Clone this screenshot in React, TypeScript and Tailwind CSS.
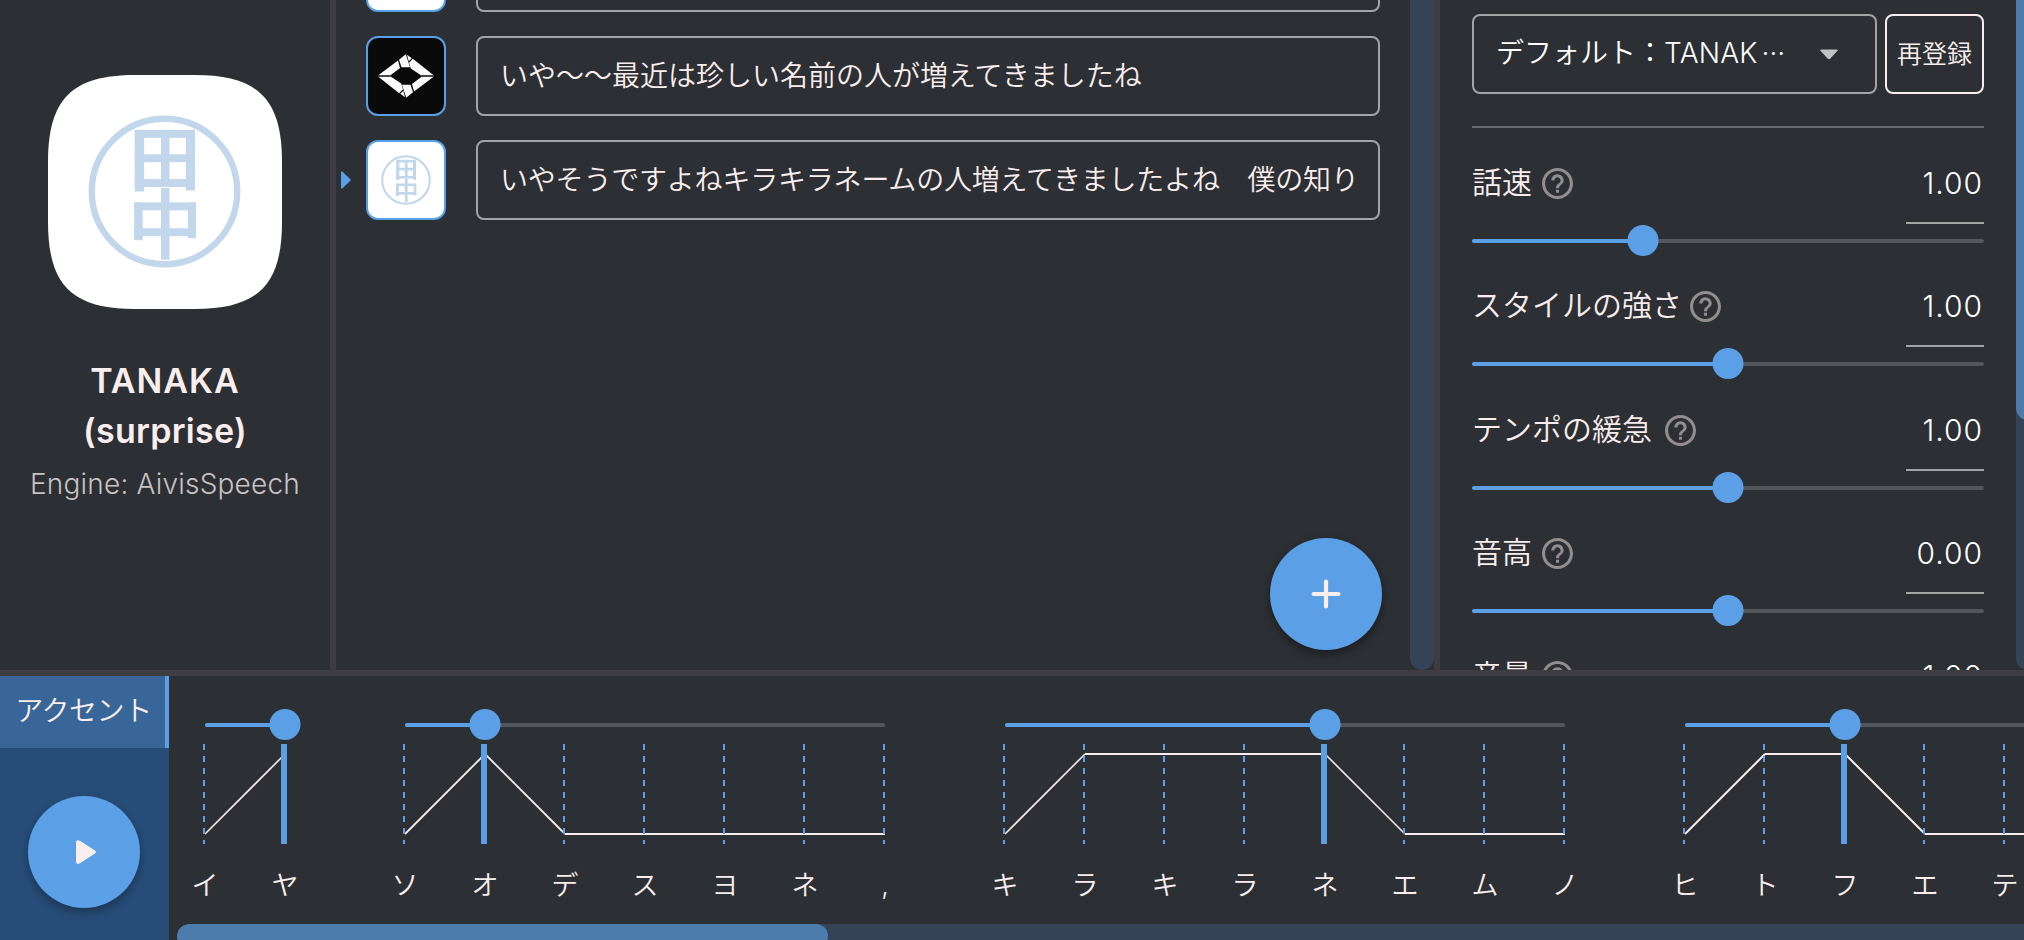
import React from "react";

const JP = "font-['Inter','Noto_Sans_CJK_JP',sans-serif]";

function TanakaMark({ className }: { className: string }) {
  return (
    <svg viewBox="0 0 154 154" className={className} fill="#c2d6ec">
      <circle cx="77" cy="77" r="73.2" fill="none" stroke="#c2d6ec" strokeWidth="6.4" />
      <rect x="47" y="15" width="9.5" height="62" />
      <rect x="98.5" y="15" width="9.2" height="61" />
      <rect x="73.5" y="15" width="8.5" height="55" />
      <rect x="47" y="15" width="60" height="8" />
      <rect x="47" y="39.5" width="60" height="8" />
      <rect x="47" y="64.5" width="60" height="8" />
      <rect x="46.5" y="88" width="62" height="8" />
      <rect x="46.5" y="88" width="8.5" height="38" />
      <rect x="100.5" y="88" width="8.2" height="36" />
      <rect x="46.5" y="114" width="62" height="8" />
      <rect x="73.5" y="73.5" width="8.5" height="72" />
    </svg>
  );
}

function ApertureMark() {
  const half = (
    <g>
      <polygon points="12.3,39.2 32,24.6 34,32 24.5,39.2" />
      <polygon points="33,23.8 39.8,18.3 44,31.2 35.5,31.2" />
      <polygon points="41,18.8 45.8,22.2 42.6,25.2" />
      <polygon points="46.8,22.8 67.7,39.2 55,39.2 44.8,32.6 43,26.8" />
    </g>
  );
  return (
    <svg viewBox="2 2 76 76" className="h-[76px] w-[76px] shrink-0" fill="#fafafa">
      {half}
      <g transform="rotate(180 40 40)">{half}</g>
      <rect x="12.3" y="39.2" width="13" height="1.6" fill="#4a4645" />
      <rect x="54.7" y="39.2" width="13" height="1.6" fill="#4a4645" />
    </svg>
  );
}

function Row({
  text,
  icon,
  active,
}: {
  text: string;
  icon: "tanaka" | "aperture";
  active?: boolean;
}) {
  return (
    <div className="flex h-20 items-center">
      <div className="flex w-[30px] pl-[5px]">
        {active && (
          <svg viewBox="0 0 10 18" className="h-[18px] w-[10px]" fill="#5ba0e6">
            <path d="M0 1.2Q0 0 1.3 .4L9.6 8.4Q10 9 9.6 9.6L1.3 17.6Q0 18 0 16.8Z" />
          </svg>
        )}
      </div>
      <div
        className={
          "flex h-20 w-20 items-center justify-center overflow-hidden rounded-xl border-2 border-[#5ba0e6] " +
          (icon === "tanaka" ? "bg-white" : "bg-[#0a0a0a]")
        }
      >
        {icon === "tanaka" ? <TanakaMark className="h-[50px] w-[50px]" /> : <ApertureMark />}
      </div>
      <div
        className={
          "ml-[30px] flex h-20 w-[904px] items-center overflow-hidden rounded-lg border-2 border-[#a3a4a6] px-[22px] text-[28px] font-[350] whitespace-nowrap text-[#f9eeed] " +
          (active ? "tracking-[-0.2px]" : "")
        }
      >
        <span>{text}</span>
      </div>
    </div>
  );
}

function Slider({ value, width }: { value: number; width: number }) {
  return (
    <div className="relative h-1 rounded-full bg-[#55565b]" style={{ width }}>
      <div className="h-1 rounded-full bg-[#5ba0e6]" style={{ width: width * value }} />
      <div
        className="absolute -top-[14px] h-[31px] w-[31px] -translate-x-1/2 rounded-full bg-[#5ba0e6]"
        style={{ left: width * value }}
      />
    </div>
  );
}

function HelpIcon() {
  return (
    <svg viewBox="2 2 20 20" className="h-[31px] w-[31px]" fill="#928d8e">
      <path d="M11 18h2v-2h-2v2zm1-16C6.48 2 2 6.48 2 12s4.48 10 10 10 10-4.48 10-10S17.52 2 12 2zm0 18c-4.41 0-8-3.59-8-8s3.59-8 8-8 8 3.59 8 8-3.59 8-8 8zm0-14c-2.21 0-4 1.79-4 4h2c0-1.1.9-2 2-2s2 .9 2 2c0 2-3 1.75-3 5h2c0-2.25 3-2.5 3-5 0-2.21-1.79-4-4-4z" />
    </svg>
  );
}

const params = [
  { label: "話速", w: 60, value: "1.00", pos: 1 / 3 },
  { label: "スタイルの強さ", w: 208, value: "1.00", pos: 0.5 },
  { label: "テンポの緩急", w: 183, value: "1.00", pos: 0.5 },
  { label: "音高", w: 60, value: "0.00", pos: 0.5 },
  { label: "音量", w: 60, value: "1.00", pos: 0.5 },
];

const phrases = [
  { moras: ["イ", "ヤ"], accent: 2, slant: 1.6 },
  { moras: ["ソ", "オ", "デ", "ス", "ヨ", "ネ", ","], accent: 2, slant: 1.8 },
  { moras: ["キ", "ラ", "キ", "ラ", "ネ", "エ", "ム", "ノ"], accent: 5, slant: 1.6 },
  { moras: ["ヒ", "ト", "フ", "エ", "テ"], accent: 3, slant: 2 },
];

function Phrase({ moras, accent, slant }: { moras: string[]; accent: number; slant: number }) {
  const n = moras.length;
  const last = n === 5 ? n : n - 1;
  const x = (i: number) => 40 + i * 80;
  const high = (i: number) => (i > 0 || accent === 1) && i < accent;
  return (
    <div className="shrink-0" style={{ width: n * 80 }}>
      <div className="pt-[47px] pl-[41px]">
        <Slider width={last * 80} value={(accent - 1) / last} />
      </div>
      <svg className="mt-[17px] block h-[100px]" width={n * 80} viewBox={`0 0 ${n * 80} 100`}>
        {Array.from({ length: last }, (_, i) => {
          const y1 = high(i) ? 10 : 90;
          const y2 = high(i + 1) ? 10 : 90;
          return (
            <line
              key={i}
              x1={x(i) + 1}
              x2={x(i + 1) + 1}
              y1={y1}
              y2={y2}
              stroke="#f9eeed"
              strokeWidth={y1 === y2 ? 2 : slant}
            />
          );
        })}
        {moras.map((_, i) =>
          i === accent - 1 ? (
            <rect key={i} x={x(i) - 3} y="0" width="6" height="100" fill="#5ba0e6" />
          ) : (
            <line key={i} x1={x(i)} x2={x(i)} y1="0" y2="100" stroke="#5ba0e6" strokeWidth="2" strokeDasharray="6 6" />
          ),
        )}
      </svg>
      <div className="mt-[22px] flex h-10 items-center text-[27px] font-[350] text-[#f9eeed]">
        {moras.map((m, i) => (
          <span key={i} className="w-20 pl-0.5 text-center">
            {m}
          </span>
        ))}
      </div>
    </div>
  );
}

export default function App() {
  return (
    <div className={`flex h-[940px] w-[2024px] flex-col overflow-hidden bg-[#2c2f33] ${JP}`}>
      <div className="flex h-[670px] overflow-hidden">
        <aside className="flex w-[330px] flex-col items-center pt-[75px]">
          <div className="grid h-[234px] w-[234px] place-items-center">
            <svg viewBox="0 0 234 234" className="col-start-1 row-start-1 h-[234px] w-[234px]" fill="#fff">
              <path d="M87 0H147C210 0 234 24 234 87V147C234 210 210 234 147 234H87C24 234 0 210 0 147V87C0 24 24 0 87 0Z" />
            </svg>
            <TanakaMark className="col-start-1 row-start-1 mr-[1px] mb-[2px] h-[153px] w-[153px]" />
          </div>
          <div className="mt-[47px] text-center text-[34px] leading-[50px] font-semibold tracking-[0.3px] text-[#f9eeed]">
            <div className="tracking-[1px]">TANAKA</div>
            <div>(surprise)</div>
          </div>
          <div className="mt-1 text-[28px] leading-[48px] font-light tracking-[0.2px] text-[#c9c2c2]">
            Engine: AivisSpeech
          </div>
        </aside>
        <div className="w-1.5 bg-[#3d3d42]" />
        <main className="relative flex w-[1098px] overflow-hidden">
          <div className="-mt-[68px] flex w-[1074px] flex-col gap-6">
            <Row icon="tanaka" text="" />
            <Row icon="aperture" text="いや〜〜最近は珍しい名前の人が増えてきましたね" />
            <Row icon="tanaka" active text="いやそうですよねキラキラネームの人増えてきましたよね　僕の知り" />
          </div>
          <div className="h-[670px] w-6 rounded-b-xl bg-[#344456]" />
          <button className="absolute top-[538px] left-[934px] flex h-28 w-28 items-center justify-center rounded-full bg-[#5ba0e6] shadow-[0_4px_10px_rgba(0,0,0,0.4)]">
            <svg viewBox="0 0 30 30" className="h-[30px] w-[30px]" stroke="#f9eeed" strokeWidth="4.2" strokeLinecap="round">
              <path d="M15 2.6V27.4M2.6 15H27.4" />
            </svg>
          </button>
        </main>
        <div className="w-1.5 bg-[#3d3d42]" />
        <section className="flex w-[584px] overflow-hidden">
          <div className="w-[576px] shrink-0 px-8 pt-3.5">
            <div className="flex gap-2">
              <div className="flex h-20 w-[405px] items-center rounded-lg border-2 border-[#a3a4a6] pl-[22px] text-[28px] font-[350] text-white">
                <span className="-mt-0.5 w-[300px] whitespace-nowrap">
                  デフォルト：<span className="font-light tracking-[0.2px]">TANAK</span>
                  <span className="inline-block -translate-y-2 pl-1">…</span>
                </span>
                <svg viewBox="0 0 18 10" className="ml-[24px] h-[11px] w-[18px]" fill="#bfc0c1">
                  <path d="M1.5 0h15q2 0 .8 1.5L10.4 9q-1.4 1.4-2.8 0L.7 1.5Q-.5 0 1.5 0Z" />
                </svg>
              </div>
              <button className="flex h-20 w-[99px] items-center justify-center rounded-lg border-2 border-[#f9eeed] pt-0.5 text-[25px] font-[350] text-[#f9eeed]">
                再登録
              </button>
            </div>
            <div className="mt-8 h-0.5 bg-[#67696c]" />
            <div className="pt-8">
              {params.map((p) => (
                <div key={p.label} className="h-[123.3px]">
                  <div className="flex h-16 items-start">
                    <span
                      className="text-[30px] leading-[45px] font-[350] whitespace-nowrap text-[#f9eeed]"
                      style={{ width: p.w }}
                    >
                      {p.label}
                    </span>
                    <span className="mt-2 ml-2.5">
                      <HelpIcon />
                    </span>
                    <span className="ml-auto h-16 w-[78px] border-b-2 border-[#a3a4a6] pr-px text-right text-[30px] leading-[46px] font-light tracking-[1px] whitespace-nowrap text-white">
                      {p.value}
                    </span>
                  </div>
                  <div className="pt-[15px]">
                    <Slider width={512} value={p.pos} />
                  </div>
                </div>
              ))}
            </div>
          </div>
          <div className="h-[670px] w-2 shrink-0 overflow-hidden">
            <div className="h-[670px] w-6 rounded-b-xl bg-[#344456]">
              <div className="h-[420px] rounded-b-xl bg-[#4c7cac]" />
            </div>
          </div>
        </section>
      </div>
      <div className="h-1.5 bg-[#3d3d42]" />
      <div className="flex h-[264px]">
        <div className="flex w-[169px] shrink-0 flex-col items-center bg-[#274c77]">
          <div className="flex h-[72px] w-full items-center justify-center border-r-4 border-[#5ba0e6] bg-[#386698] pl-0.5 text-[28px] font-[350] tracking-[-0.4px] whitespace-nowrap text-[#f9eeed]">
            <span className="-mt-0.5">アクセント</span>
          </div>
          <button className="mt-12 mr-px flex h-28 w-28 items-center justify-center rounded-full bg-[#5ba0e6] shadow-[0_4px_10px_rgba(0,0,0,0.3)]">
            <svg viewBox="0 0 20 24" className="ml-1 h-6 w-5" fill="#f9eeed">
              <path d="M0 3Q0-1.2 4 .8L18.6 10.2Q21.4 12 18.6 13.8L4 23.2Q0 25.2 0 21Z" />
            </svg>
          </button>
        </div>
        <div className="flex min-w-0 flex-1 flex-col overflow-hidden">
          <div className="-ml-[5px] flex h-[248px] gap-10">
            {phrases.map((p, i) => (
              <Phrase key={i} {...p} />
            ))}
          </div>
          <div className="ml-2 h-4 overflow-hidden rounded-tl-xl bg-[#344456]">
            <div className="h-6 w-[651px] rounded-xl bg-[#4c7cac]" />
          </div>
        </div>
      </div>
    </div>
  );
}
